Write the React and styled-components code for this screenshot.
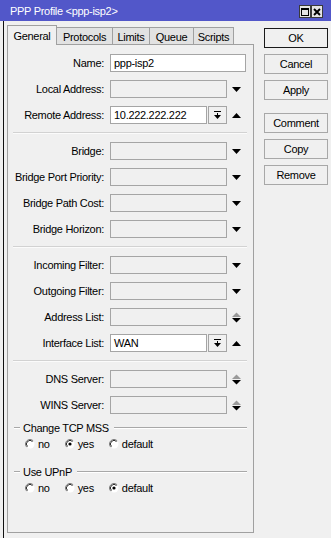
import React from 'react';
import styled, { createGlobalStyle } from 'styled-components';

const GlobalStyle = createGlobalStyle`
  html, body {
    margin: 0;
    padding: 0;
    background: #f0f0f0;
  }
  body {
    font-family: "Liberation Sans", Arial, sans-serif;
    font-size: 11px;
    letter-spacing: -0.3px;
    color: #000;
  }
  * { box-sizing: border-box; }
`;

const Window = styled.div`
  width: 331px;
  height: 538px;
  background: #f0f0f0;
  display: flex;
  flex-direction: column;
  overflow: hidden;
`;

const TitleBar = styled.div`
  height: 21px;
  flex: none;
  background: #5257c9;
  color: #fff;
  display: flex;
  align-items: center;
  padding: 0 8px 0 10px;
`;

const Title = styled.span`
  flex: 1;
`;

const TitleBtn = styled.div`
  width: 12px;
  height: 13px;
  margin-top: 2px;
  background: #e4e4e4;
  border: 1px solid #3a3a3a;
  display: flex;
  align-items: center;
  justify-content: center;
`;

const Body = styled.div`
  flex: 1;
  display: flex;
  margin-left: 3px;
  border-left: 1px solid #111;
  padding: 4px 0 5px 3px;
`;

const Main = styled.div`
  width: 247px;
  display: flex;
  flex-direction: column;
`;

const TabBar = styled.div`
  height: 19px;
  display: flex;
  align-items: flex-end;
  position: relative;
  z-index: 1;
`;

const Tab = styled.div`
  width: ${p => p.$w}px;
  height: ${p => (p.$active ? 20 : 17)}px;
  margin-bottom: ${p => (p.$active ? -1 : 0)}px;
  margin-left: -1px;
  &:first-child { margin-left: 0; }
  background: ${p => (p.$active ? '#f0f0f0' : '#e2e2e2')};
  border: 1px solid #a0a0a0;
  border-bottom: none;
  display: flex;
  align-items: center;
  justify-content: center;
  padding-top: ${p => (p.$active ? 0 : 1)}px;
`;

const Panel = styled.div`
  flex: 1;
  border: 1px solid #a0a0a0;
  padding: 9px 6px 0 0;
  display: flex;
  flex-direction: column;
  gap: 8px;
`;

const Row = styled.div`
  height: 18px;
  display: grid;
  grid-template-columns: 102px 117px 19px;
  align-items: center;
`;

const Label = styled.div`
  text-align: right;
  padding-right: 6px;
  white-space: nowrap;
`;

const Field = styled.div`
  grid-column: ${p => (p.$wide ? 'span 2' : 'auto')};
  height: 18px;
  display: flex;
  gap: 1px;
`;

const Input = styled.div`
  flex: 1;
  height: 18px;
  border: 1px solid #a5a5a5;
  background: ${p => (p.$filled ? '#fff' : '#f0f0f0')};
  padding-left: 3px;
  display: flex;
  align-items: center;
  white-space: nowrap;
  overflow: hidden;
`;

const SmallBtn = styled.div`
  width: 19px;
  height: 18px;
  border: 1px solid #a5a5a5;
  background: #f0f0f0;
  display: flex;
  align-items: center;
  justify-content: center;
`;

const Arrow = styled.div`
  display: flex;
  align-items: center;
  justify-content: center;
  height: 18px;
`;

const Separator = styled.div`
  height: 2px;
  margin-left: 5px;
  border-top: 1px solid #d2d2d2;
  border-bottom: 1px solid #fbfbfb;
`;

const Group = styled.div`
  margin-top: ${p => p.$top}px;
  display: flex;
  flex-direction: column;
  gap: 3px;
`;

const GroupHead = styled.div`
  height: 12px;
  display: flex;
  align-items: center;
  padding-left: 6px;
`;

const GroupLine = styled.div`
  width: ${p => (p.$grow ? 'auto' : '6px')};
  flex: ${p => (p.$grow ? 1 : 'none')};
  height: 2px;
  border-top: 1px solid #a8a8a8;
  border-bottom: 1px solid #fff;
`;

const GroupTitle = styled.span`
  padding: 0 5px 0 3px;
  white-space: nowrap;
`;

const RadioRow = styled.div`
  height: 14px;
  display: flex;
  align-items: center;
  padding-left: 17px;
`;

const RadioItem = styled.div`
  display: flex;
  align-items: center;
  gap: 3px;
  margin-right: 15px;
`;

const Side = styled.div`
  width: 64px;
  margin-left: 10px;
  margin-top: 3px;
  display: flex;
  flex-direction: column;
  gap: 6px;
`;

const Button = styled.div`
  height: 20px;
  margin-top: ${p => (p.$gapTop ? 7 : 0)}px;
  border: 1px solid ${p => (p.$default ? '#1a1a1a' : '#a8a8a8')};
  background: #f0f0f0;
  display: flex;
  align-items: center;
  justify-content: center;
`;

const Down = ({ color = '#000' }) => (
  <svg width="9" height="5" viewBox="0 0 9 5">
    <polygon points="0,0 9,0 4.5,5" fill={color} />
  </svg>
);

const Up = ({ color = '#000' }) => (
  <svg width="9" height="5" viewBox="0 0 9 5">
    <polygon points="0,5 9,5 4.5,0" fill={color} />
  </svg>
);

const UpDown = () => (
  <svg width="9" height="11" viewBox="0 0 9 11">
    <polygon points="0,5 9,5 4.5,0.5" fill="#9a9a9a" />
    <polygon points="0,6 9,6 4.5,10.5" fill="#000" />
  </svg>
);

const RemoveIcon = () => (
  <svg width="7" height="9" viewBox="0 0 7 9">
    <rect x="0" y="0" width="7" height="1" fill="#000" />
    <rect x="3" y="2" width="1" height="3" fill="#000" />
    <polygon points="0,4 7,4 3.5,8" fill="#000" />
  </svg>
);

const Radio = ({ checked }) => (
  <svg width="10" height="10" viewBox="0 0 10 10">
    <circle cx="5" cy="5" r="4.5" fill="#fff" />
    <path d="M1.8 8.2 A4.5 4.5 0 0 1 8.2 1.8" fill="none" stroke="#7a7a7a" strokeWidth="1" />
    <path d="M2.5 7.5 A3.5 3.5 0 0 1 7.5 2.5" fill="none" stroke="#303030" strokeWidth="1" />
    {checked && <circle cx="5" cy="5" r="1.6" fill="#000" />}
  </svg>
);

const tabs = [
  { name: 'General', w: 50, active: true },
  { name: 'Protocols', w: 57 },
  { name: 'Limits', w: 38 },
  { name: 'Queue', w: 45 },
  { name: 'Scripts', w: 41 },
];

const sections = [
  [
    { label: 'Name:', kind: 'text', value: 'ppp-isp2' },
    { label: 'Local Address:', kind: 'drop' },
    { label: 'Remote Address:', kind: 'value', value: '10.222.222.222' },
  ],
  [
    { label: 'Bridge:', kind: 'drop' },
    { label: 'Bridge Port Priority:', kind: 'drop' },
    { label: 'Bridge Path Cost:', kind: 'drop' },
    { label: 'Bridge Horizon:', kind: 'drop' },
  ],
  [
    { label: 'Incoming Filter:', kind: 'drop' },
    { label: 'Outgoing Filter:', kind: 'drop' },
    { label: 'Address List:', kind: 'updown' },
    { label: 'Interface List:', kind: 'value', value: 'WAN' },
  ],
  [
    { label: 'DNS Server:', kind: 'updown' },
    { label: 'WINS Server:', kind: 'updown' },
  ],
];

const groups = [
  { title: 'Change TCP MSS', checked: 'yes', top: 0 },
  { title: 'Use UPnP', checked: 'default', top: 7 },
];

const FormRow = ({ label, kind, value }) => (
  <Row>
    <Label>{label}</Label>
    {kind === 'text' && (
      <Field $wide>
        <Input $filled>{value}</Input>
      </Field>
    )}
    {kind === 'value' && (
      <>
        <Field>
          <Input $filled>{value}</Input>
          <SmallBtn><RemoveIcon /></SmallBtn>
        </Field>
        <Arrow><Up /></Arrow>
      </>
    )}
    {kind === 'drop' && (
      <>
        <Field><Input /></Field>
        <Arrow><Down /></Arrow>
      </>
    )}
    {kind === 'updown' && (
      <>
        <Field><Input /></Field>
        <Arrow><UpDown /></Arrow>
      </>
    )}
  </Row>
);

export default function App() {
  return (
    <>
      <GlobalStyle />
      <Window>
        <TitleBar>
          <Title>PPP Profile &lt;ppp-isp2&gt;</Title>
          <TitleBtn>
            <svg width="8" height="8" viewBox="0 0 8 8">
              <rect x="0.5" y="0.5" width="7" height="7" fill="none" stroke="#000" />
              <rect x="0" y="0" width="8" height="2" fill="#000" />
            </svg>
          </TitleBtn>
          <TitleBtn>
            <svg width="8" height="8" viewBox="0 0 8 8">
              <path d="M1 1 L7 7 M7 1 L1 7" stroke="#000" strokeWidth="1.9" />
            </svg>
          </TitleBtn>
        </TitleBar>
        <Body>
          <Main>
            <TabBar>
              {tabs.map(t => (
                <Tab key={t.name} $w={t.w} $active={t.active}>{t.name}</Tab>
              ))}
            </TabBar>
            <Panel>
              {sections.map((rows, i) => (
                <React.Fragment key={i}>
                  {i > 0 && <Separator />}
                  {rows.map(r => <FormRow key={r.label} {...r} />)}
                </React.Fragment>
              ))}
              {groups.map(g => (
                <Group key={g.title} $top={g.top}>
                  <GroupHead>
                    <GroupLine />
                    <GroupTitle>{g.title}</GroupTitle>
                    <GroupLine $grow />
                  </GroupHead>
                  <RadioRow>
                    {['no', 'yes', 'default'].map(o => (
                      <RadioItem key={o}>
                        <Radio checked={g.checked === o} />
                        <span>{o}</span>
                      </RadioItem>
                    ))}
                  </RadioRow>
                </Group>
              ))}
            </Panel>
          </Main>
          <Side>
            <Button $default>OK</Button>
            <Button>Cancel</Button>
            <Button>Apply</Button>
            <Button $gapTop>Comment</Button>
            <Button>Copy</Button>
            <Button>Remove</Button>
          </Side>
        </Body>
      </Window>
    </>
  );
}
